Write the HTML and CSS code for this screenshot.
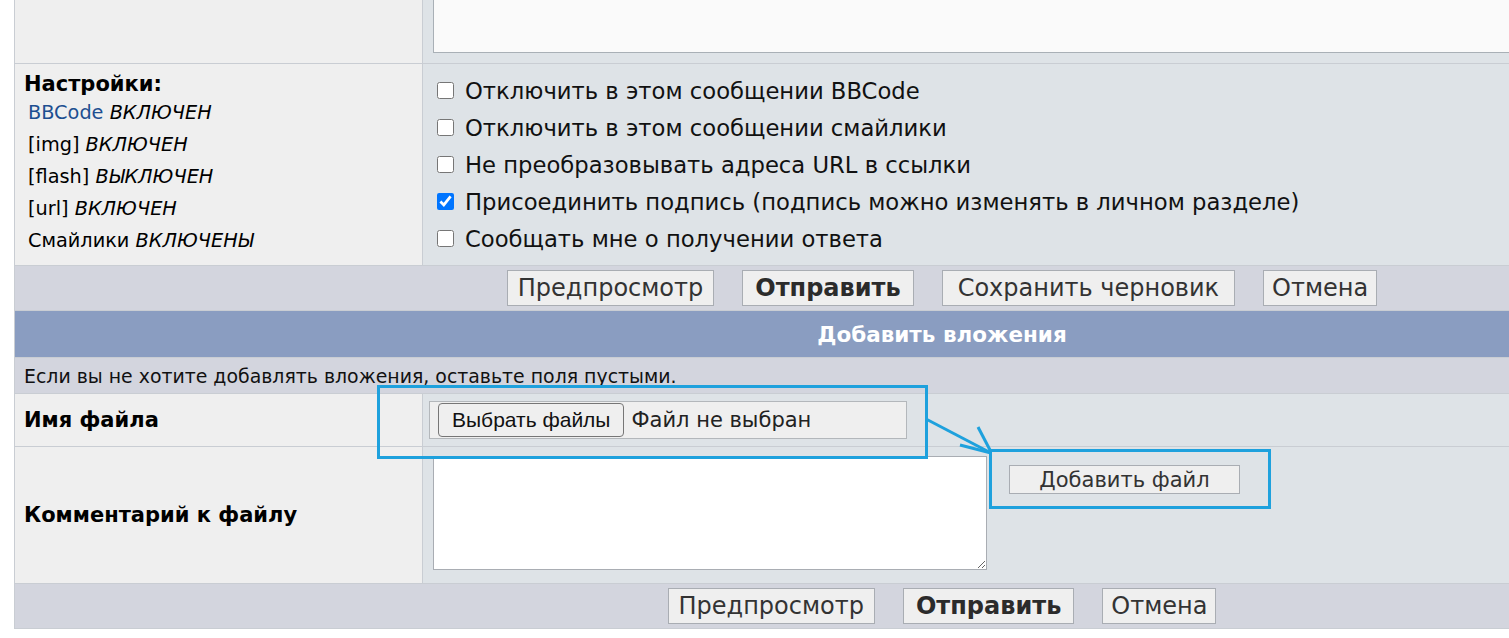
FILE: index.html
```html
<!DOCTYPE html>
<html>
<head>
    <meta charset="UTF-8">
    <title>Добавить вложения</title>
    <link rel="stylesheet" href="styles.css">
</head>
<body>
<table class="forumline">
    <colgroup>
        <col class="col-label">
        <col>
    </colgroup>
    <tr>
        <td class="row1"></td>
        <td class="row2 message-cell"><textarea class="message"></textarea></td>
    </tr>
    <tr>
        <td class="row1 options-label">
            <div class="options-title">Настройки:</div>
            <div class="options-list">
                <div><a href="#">BBCode</a> <i>ВКЛЮЧЕН</i></div>
                <div>[img] <i>ВКЛЮЧЕН</i></div>
                <div>[flash] <i>ВЫКЛЮЧЕН</i></div>
                <div>[url] <i>ВКЛЮЧЕН</i></div>
                <div>Смайлики <i>ВКЛЮЧЕНЫ</i></div>
            </div>
        </td>
        <td class="row2 options">
            <label class="option"><input type="checkbox">Отключить в этом сообщении BBCode</label>
            <label class="option"><input type="checkbox">Отключить в этом сообщении смайлики</label>
            <label class="option"><input type="checkbox">Не преобразовывать адреса URL в ссылки</label>
            <label class="option"><input type="checkbox" checked>Присоединить подпись (подпись можно изменять в личном разделе)</label>
            <label class="option"><input type="checkbox">Сообщать мне о получении ответа</label>
        </td>
    </tr>
    <tr>
        <td class="cat-bottom" colspan="2">
            <div class="buttons">
                <button class="btn">Предпросмотр</button>
                <button class="btn main">Отправить</button>
                <button class="btn draft">Сохранить черновик</button>
                <button class="btn cancel">Отмена</button>
            </div>
        </td>
    </tr>
    <tr>
        <th colspan="2">Добавить вложения</th>
    </tr>
    <tr>
        <td class="row3 hint" colspan="2">Если вы не хотите добавлять вложения, оставьте поля пустыми.</td>
    </tr>
    <tr>
        <td class="row1 field-label">Имя файла</td>
        <td class="row2 file-cell">
            <div class="file-input">
                <span class="file-btn">Выбрать файлы</span>
                <span class="file-name">Файл не выбран</span>
            </div>
        </td>
    </tr>
    <tr>
        <td class="row1 field-label">Комментарий к файлу</td>
        <td class="row2 comment-cell">
            <div class="comment-wrap">
                <textarea class="comment"></textarea>
                <button class="add-file">Добавить файл</button>
            </div>
        </td>
    </tr>
    <tr>
        <td class="cat-bottom" colspan="2">
            <div class="buttons">
                <button class="btn">Предпросмотр</button>
                <button class="btn main">Отправить</button>
                <button class="btn cancel">Отмена</button>
            </div>
        </td>
    </tr>
</table>

<svg class="annotations" width="1509" height="638" viewBox="0 0 1509 638">
    <rect x="378.5" y="386.5" width="548" height="71"/>
    <rect x="990.5" y="450.5" width="279" height="57"/>
    <line x1="926" y1="419" x2="991" y2="453"/>
    <line x1="978" y1="427" x2="990" y2="450"/>
    <line x1="960" y1="445" x2="991" y2="453"/>
</svg>
</body>
</html>
```

FILE: styles.css
```css
html,
body {
    margin: 0;
    overflow: hidden;
    background: #ffffff;
}

body {
    position: relative;
    width: 1509px;
    height: 638px;
    padding-left: 14px;
    box-sizing: border-box;
    font-family: "DejaVu Sans", Verdana, sans-serif;
    color: #000000;
}

.forumline {
    width: 1856px;
    margin-top: -20px;
    table-layout: fixed;
    border-spacing: 1px;
    background: #c9cdd3;
}

.col-label {
    width: 407px;
}

td,
th {
    padding: 0;
}

.row1 {
    background: #efefef;
}

.row2 {
    background: #dee3e7;
}

.row3,
.cat-bottom {
    background: #d3d5de;
}

/* message row (cut off at the top) */
.message-cell {
    padding: 0 10px 10px;
}

.message {
    display: block;
    width: 1420px;
    height: 72px;
    box-sizing: border-box;
    border: 1px solid #a9b0b6;
    background: #fafafa;
    resize: none;
}

/* options */
.options-label,
.options {
    vertical-align: top;
    padding-top: 8px;
    padding-bottom: 8px;
}

.options-label {
    padding-left: 9px;
}

.options-title {
    font-size: 21px;
    font-weight: bold;
    line-height: 24px;
    margin-bottom: 1px;
}

.options-list {
    padding-left: 4px;
    font-size: 19.3px;
    line-height: 32px;
}

.options-list a {
    color: #1d4f91;
    text-decoration: none;
}

.options {
    padding-left: 14px;
}

.option {
    display: flex;
    align-items: center;
    height: 37px;
    font-size: 22.7px;
    color: #111111;
    white-space: nowrap;
}

.option input {
    flex: none;
    width: 17px;
    height: 17px;
    margin: 0 11px 0 0;
}

/* button rows */
.cat-bottom {
    padding: 4px 0;
}

.buttons {
    display: flex;
    justify-content: center;
    gap: 28px;
}

.btn {
    height: 36px;
    padding: 0 10px;
    font-family: "DejaVu Sans", Verdana, sans-serif;
    font-size: 24px;
    color: #333333;
    background: #efefef;
    border: 1px solid #a9adb3;
    border-radius: 0;
}

.btn.main {
    padding: 0 12px;
    font-weight: bold;
    color: #2b2b2b;
}

.btn.draft {
    padding: 0 15px;
}

.btn.cancel {
    padding: 0 8px;
}

th {
    height: 46px;
    background: #8a9dc1;
    color: #ffffff;
    font-size: 21.5px;
    font-weight: bold;
    text-align: center;
}

.hint {
    height: 35px;
    padding-left: 9px;
    font-size: 18.9px;
    color: #111111;
}

.field-label {
    padding-left: 9px;
    font-size: 21px;
    font-weight: bold;
}

/* file input */
.file-cell {
    padding: 7px 6px;
}

.file-input {
    display: flex;
    align-items: center;
    width: 478px;
    height: 38px;
    box-sizing: border-box;
    padding: 0 8px;
    border: 1px solid #b3b7bb;
    background: #efefef;
}

.file-btn {
    display: flex;
    align-items: center;
    height: 34px;
    padding: 0 13px;
    box-sizing: border-box;
    border: 1px solid #767676;
    border-radius: 4px;
    background: #efefef;
    font-family: "Liberation Sans", Arial, sans-serif;
    font-size: 21px;
    color: #111111;
}

.file-name {
    margin-left: 7px;
    font-size: 21px;
    color: #222222;
}

/* comment */
.comment-cell {
    padding: 9px 10px 13px;
    vertical-align: top;
}

.comment-wrap {
    display: flex;
    align-items: flex-start;
}

.comment {
    width: 554px;
    height: 114px;
    margin: 0;
    box-sizing: border-box;
    border: 1px solid #a9adb3;
    background: #ffffff;
}

.add-file {
    width: 231px;
    height: 29px;
    margin: 9px 0 0 22px;
    padding: 0;
    font-family: "DejaVu Sans", Verdana, sans-serif;
    font-size: 21px;
    color: #333333;
    background: #efefef;
    border: 1px solid #a9adb3;
}

/* blue hand-drawn marks over the form */
.annotations {
    position: absolute;
    top: 0;
    left: 0;
    pointer-events: none;
    fill: none;
    stroke: #1ea1dd;
    stroke-width: 3;
}
```
